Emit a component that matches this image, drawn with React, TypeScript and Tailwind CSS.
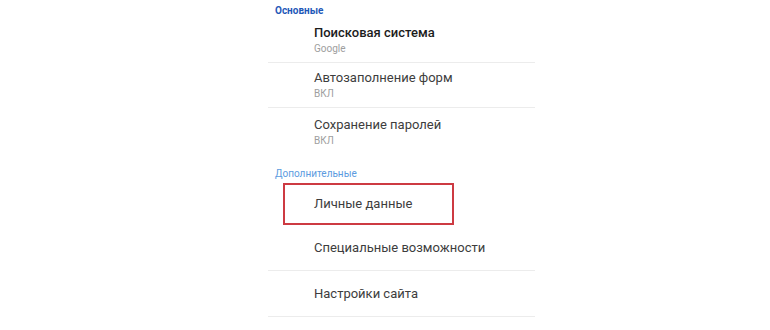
const font = { fontFamily: "Roboto, 'Noto Sans', sans-serif" };

function Divider() {
  return <div className="h-px bg-[#ececec]" />;
}

function Item({ title, sub, h, pt, strong }: { title: string; sub?: string; h: string; pt: string; strong?: boolean }) {
  return (
    <div className={`${h} ${pt} pl-[46px] flex flex-col`}>
      <div
        className={`text-[13px] leading-[16px] ${strong ? "font-medium text-[#1c1c1c]" : "text-[#3d3d3d]"}`}
      >
        {title}
      </div>
      {sub && <div className="mt-[2px] text-[10px] leading-[12px] text-[#9e9e9e]">{sub}</div>}
    </div>
  );
}

function Simple({ title }: { title: string }) {
  return (
    <div className="h-[45px] pl-[46px] flex items-center">
      <span className="text-[13px] leading-[16px] text-[#3d3d3d]">{title}</span>
    </div>
  );
}

export default function App() {
  return (
    <div className="w-[770px] h-[330px] overflow-hidden bg-white" style={font}>
      <div className="ml-[268px] w-[267px]">
        {/* Основные */}
        <div className="h-[20px] pl-[7px] flex items-center">
          <span className="text-[10px] font-bold text-[#1f58b8]">Основные</span>
        </div>
        <Item title="Поисковая система" sub="Google" h="h-[42px]" pt="pt-[5px]" strong />
        <Divider />
        <Item title="Автозаполнение форм" sub="ВКЛ" h="h-[44px]" pt="pt-[7px]" />
        <Divider />
        <Item title="Сохранение паролей" sub="ВКЛ" h="h-[56px]" pt="pt-[9px]" />

        {/* Дополнительные */}
        <div className="h-[18px] pl-[7px] flex items-center">
          <span className="text-[10px] text-[#5b9be0]">Дополнительные</span>
        </div>
        <div className="relative h-[43px] pl-[46px] flex items-center">
          <span className="text-[13px] leading-[16px] text-[#3d3d3d]">Личные данные</span>
          <div className="absolute left-[15px] top-[1px] w-[171px] h-[42px] border-2 border-[#cd3a42]" />
        </div>
        <Simple title="Специальные возможности" />
        <Divider />
        <Simple title="Настройки сайта" />
        <Divider />
        <Simple title="Экономия трафика" />
      </div>
    </div>
  );
}
